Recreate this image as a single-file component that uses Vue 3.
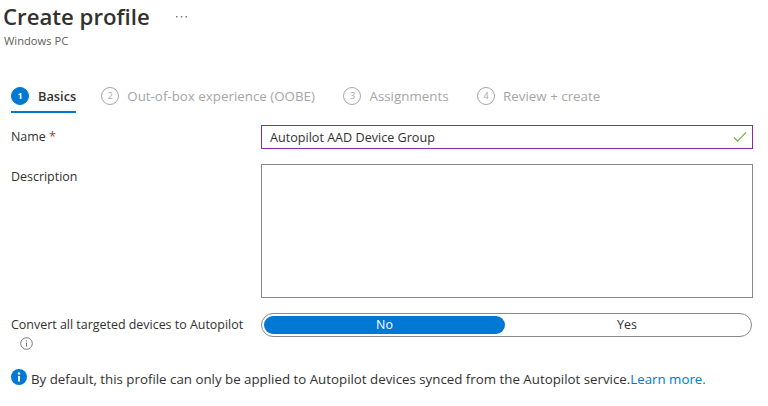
<template>
  <div class="page">
    <header class="head">
      <div class="title-row">
        <h1 class="title">Create profile</h1>
        <svg class="more" width="11" height="2" viewBox="0 0 11 2">
          <path d="M0 0h1.5v1.5H0zM4.75 0h1.5v1.5h-1.5zM9.5 0H11v1.5H9.5z" fill="#777" />
        </svg>
      </div>
      <div class="sub">Windows PC</div>
    </header>

    <nav class="steps">
      <div v-for="(s, i) in steps" :key="s" class="step" :class="{ active: i === 0 }">
        <span class="num">{{ i + 1 }}</span>
        <span class="step-label">{{ s }}</span>
      </div>
    </nav>

    <div class="row name-row">
      <label class="lab">Name <span class="req">*</span></label>
      <div class="input">
        <span>Autopilot AAD Device Group</span>
        <svg class="check" width="14" height="12" viewBox="0 0 14 12">
          <path d="M1 6.5 L4.6 10.2 L13 1.4" fill="none" stroke="#6bb33a" stroke-width="1.2" />
        </svg>
      </div>
    </div>

    <div class="row desc-row">
      <label class="lab">Description</label>
      <div class="area"></div>
    </div>

    <div class="row toggle-row">
      <div class="lab conv">
        <div>Convert all targeted devices to Autopilot</div>
        <svg class="tip" width="13" height="13" viewBox="0 0 13 13">
          <circle cx="6.5" cy="6.5" r="5.8" fill="none" stroke="#777" stroke-width="1" />
          <path d="M6.5 5.6V9.6M6.5 3.4V4.5" stroke="#777" stroke-width="1" />
        </svg>
      </div>
      <div class="toggle">
        <div class="opt on">No</div>
        <div class="opt">Yes</div>
      </div>
    </div>

    <div class="info">
      <svg class="info-icon" width="16" height="16" viewBox="0 0 16 16">
        <circle cx="8" cy="8" r="8" fill="#0078d4" />
        <path d="M8 7v5.5" stroke="#fff" stroke-width="2" />
        <circle cx="8" cy="4.4" r="1.25" fill="#fff" />
      </svg>
      <span>By default, this profile can only be applied to Autopilot devices synced from the Autopilot service.<a class="link">Learn more.</a></span>
    </div>
  </div>
</template>

<script setup>
const steps = ['Basics', 'Out-of-box experience (OOBE)', 'Assignments', 'Review + create']
</script>

<style>
html, body { margin: 0; background: #fff; }
</style>

<style scoped>
.page {
  width: 768px;
  height: 406px;
  overflow: hidden;
  box-sizing: border-box;
  padding-left: 11px;
  font-family: "Open Sans", "Noto Sans", sans-serif;
  font-size: 12.5px;
  color: #323130;
  background: #fff;
}
.head { margin-left: -8px; height: 82px; }
.title-row { display: flex; align-items: center; height: 33px; }
.title { margin: 0; font-size: 22.2px; font-weight: 600; line-height: 33px; color: #323130; width: 173px; }
.more { display: block; }
.sub { font-size: 11.2px; line-height: 15px; color: #605e5c; padding-left: 1px; }
.steps { display: flex; height: 31px; gap: 28.5px; }
.step {
  display: flex; align-items: center; gap: 8px;
  height: 27px;
  padding-bottom: 2px;
  border-bottom: 2px solid transparent;
  color: #a6a6a6;
  font-size: 13.35px;
}
.step.active {
  color: #323130;
  font-weight: 600;
  font-size: 12.8px;
  gap: 9px;
  border-bottom-color: #0078d4;
  margin-right: -3.5px;
}
.num {
  box-sizing: border-box;
  width: 18px; height: 18px; border-radius: 50%;
  border: 1px solid #a6a6a6;
  display: flex; align-items: center; justify-content: center;
  font-size: 9px; font-weight: 400; color: #a6a6a6;
}
.active .num { background: #0078d4; border-color: #0078d4; color: #fff; font-weight: 700; }
.row { display: flex; }
.lab { width: 250px; flex: none; font-size: 12.45px; line-height: 16px; }
.req { color: #c4262e; }
.name-row { margin-top: 12px; height: 24px; align-items: center; }
.input {
  box-sizing: border-box;
  width: 492px; height: 24px;
  border: 1px solid #8a2da5;
  display: flex; align-items: center; justify-content: space-between;
  padding: 0 5px 0 8px;
  font-size: 12.6px;
}
.desc-row { margin-top: 15px; }
.desc-row .lab { margin-top: 5px; }
.area { box-sizing: border-box; width: 492px; height: 134px; border: 1px solid #8a8886; }
.toggle-row { margin-top: 15px; }
.conv { margin-top: 4px; }
.tip { display: block; margin: 4px 0 0 9px; }
.toggle {
  box-sizing: border-box;
  width: 491px; height: 24px;
  border: 1px solid #8a8886; border-radius: 12px;
  padding: 2px;
  display: flex;
}
.opt { flex: 1; text-align: center; line-height: 18px; border-radius: 9px; font-size: 12.4px; }
.opt.on { background: #0078d4; color: #fff; flex: none; width: 241px; }
.info { display: flex; align-items: center; gap: 4px; margin-top: 19px; font-size: 13.3px; }
.info-icon { margin-bottom: 3px; }
.link { color: #0078d4; }
</style>
